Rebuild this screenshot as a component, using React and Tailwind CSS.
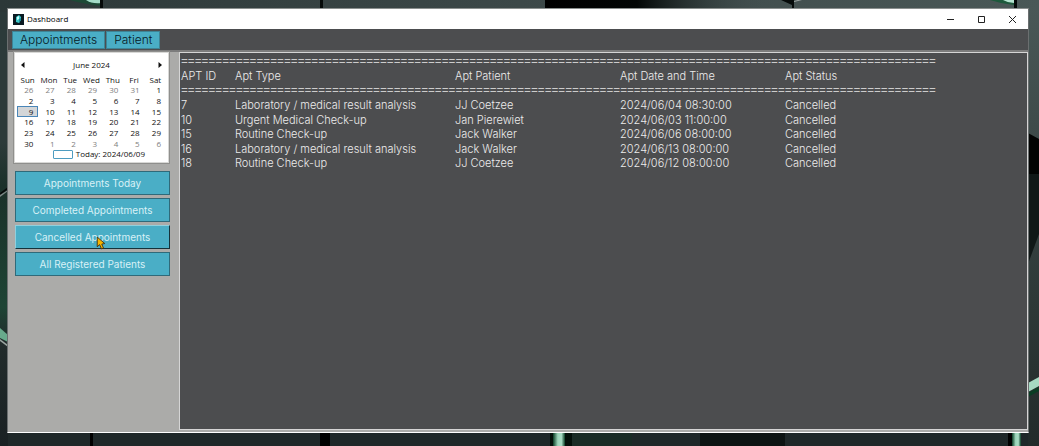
import React from "react";

const WEEKDAYS = ["Sun", "Mon", "Tue", "Wed", "Thu", "Fri", "Sat"];

const WEEKS = [
  [26, 27, 28, 29, 30, 31, 1],
  [2, 3, 4, 5, 6, 7, 8],
  [9, 10, 11, 12, 13, 14, 15],
  [16, 17, 18, 19, 20, 21, 22],
  [23, 24, 25, 26, 27, 28, 29],
  [30, 1, 2, 3, 4, 5, 6],
];

const APPOINTMENTS = [
  ["7", "Laboratory / medical result analysis", "JJ Coetzee", "2024/06/04 08:30:00", "Cancelled"],
  ["10", "Urgent Medical Check-up", "Jan Pierewiet", "2024/06/03 11:00:00", "Cancelled"],
  ["15", "Routine Check-up", "Jack Walker", "2024/06/06 08:00:00", "Cancelled"],
  ["16", "Laboratory / medical result analysis", "Jack Walker", "2024/06/13 08:00:00", "Cancelled"],
  ["18", "Routine Check-up", "JJ Coetzee", "2024/06/12 08:00:00", "Cancelled"],
];

const RULE = "=".repeat(110);

function Wallpaper() {
  return (
    <svg className="absolute inset-0 h-full w-full" viewBox="0 0 1039 446" preserveAspectRatio="none" aria-hidden="true">
      <defs>
        <linearGradient id="top" x1="0" x2="1" y1="0" y2="0">
          <stop offset="0" stopColor="#2c3838" />
          <stop offset="0.5" stopColor="#3c4848" />
          <stop offset="1" stopColor="#4a5857" />
        </linearGradient>
        <linearGradient id="shade" x1="0" x2="1" y1="0" y2="0">
          <stop offset="0" stopColor="#000" />
          <stop offset="0.4" stopColor="#020605" />
          <stop offset="1" stopColor="#46545400" />
        </linearGradient>
        <linearGradient id="left" x1="0" x2="0" y1="0" y2="1">
          <stop offset="0" stopColor="#2c3a3a" />
          <stop offset="0.3" stopColor="#2c3a3a" />
          <stop offset="0.4" stopColor="#1a3029" />
          <stop offset="0.68" stopColor="#1d4434" />
          <stop offset="0.76" stopColor="#222c2c" />
          <stop offset="1" stopColor="#1a2123" />
        </linearGradient>
        <linearGradient id="right" x1="0" x2="0" y1="0" y2="1">
          <stop offset="0" stopColor="#4a5857" />
          <stop offset="0.5" stopColor="#34403f" />
          <stop offset="1" stopColor="#222b2a" />
        </linearGradient>
        <linearGradient id="glow" x1="0" x2="1" y1="0" y2="0">
          <stop offset="0" stopColor="#0a3d24" />
          <stop offset="0.4" stopColor="#9bd3b8" />
          <stop offset="0.7" stopColor="#a8dcc4" />
          <stop offset="1" stopColor="#0a3d24" />
        </linearGradient>
      </defs>
      <rect width="1039" height="446" fill="#1f2829" />
      <rect width="1039" height="12" fill="url(#top)" />
      <rect x="545" width="230" height="12" fill="url(#shade)" />
      <path d="M70 0h32v6Q84 4 70 0Z" fill="#1d4a36" />
      <path d="M86 0h15v3Q92 4 86 0Z" fill="#a4dcc8" />
      <path d="M100 0h3v12h-3ZM320 0h3v12h-3ZM781 0h13v12h-2V5ZM1014 0h3v12h-3Z" fill="#050a09" />
      <path d="M794 2 802 0h-4l-4 1Z" fill="#a0a8a6" />
      <path d="M990 0h24v5Q1002 4 990 0Z" fill="#1d5a3c" />
      <path d="M1003 0h11v3Q1008 3 1003 0Z" fill="#b4e4d0" />
      <rect y="12" width="8" height="434" fill="url(#left)" />
      <path d="M0 193 8 187v2L0 195Z" fill="#050808" />
      <path d="M0 195 8 190v1L0 197Z" fill="#7d8886" />
      <path d="M0 328 8 335v7L0 338Z" fill="#68aa8c" />
      <path d="M0 339 8 345v2L0 341Z" fill="#9aa5a1" />
      <rect x="1028" y="8" width="11" height="438" fill="url(#right)" />
      <path d="M1028 133 1039 139v35h-11Z" fill="#020403" />
      <path d="M1028 174h11v60l-11 30Z" fill="#101817" />
      <path d="M1028 383 1039 377v9l-11 6Z" fill="#a6d9c2" />
      <path d="M1028 393 1039 387v4l-11 6Z" fill="#0a3d24" />
      <rect x="90" y="432" width="3" height="14" fill="#000" />
      <rect x="320" y="432" width="10" height="14" fill="#000" />
      <rect x="550" y="432" width="22" height="14" fill="#03100a" />
      <rect x="553" y="432" width="12" height="14" fill="url(#glow)" />
      <rect x="572" y="432" width="60" height="14" fill="#1a2c26" />
      <rect x="700" y="432" width="85" height="14" fill="#0d1413" />
      <rect x="1008" y="432" width="4" height="14" fill="#000" />
      <rect x="1012" y="432" width="9" height="14" fill="url(#glow)" />
    </svg>
  );
}

function TitleBar() {
  return (
    <header className="flex h-[20px] shrink-0 items-center bg-white">
      <svg className="ml-[5px] h-[11px] w-[11px]" viewBox="0 0 11 11" aria-hidden="true">
        <rect width="11" height="11" fill="#0a1a22" />
        <path d="M3 3 6 1l2 2v3L6 9 3 8Z" fill="#3cc8c8" />
        <path d="M4 3 6 2v3L4 6Z" fill="#c8fafa" />
        <path d="M6 5 8 4v2L6 9Z" fill="#1a8f9c" />
      </svg>
      <h1 className="ml-[3px] flex-1 font-['Open_Sans',sans-serif] text-[8px] leading-3 text-black">Dashboard</h1>
      <div className="flex h-full">
        <button type="button" aria-label="Minimize" className="flex w-[31px] items-center justify-center">
          <svg className="h-[9px] w-[9px]" viewBox="0 0 9 9"><path d="M1 4.500h7" stroke="#222" /></svg>
        </button>
        <button type="button" aria-label="Maximize" className="flex w-[31px] items-center justify-center">
          <svg className="h-[9px] w-[9px]" viewBox="0 0 9 9"><path d="M1.500 1.500h6v6h-6Z" fill="none" stroke="#222" /></svg>
        </button>
        <button type="button" aria-label="Close" className="flex w-[31px] items-center justify-center">
          <svg className="h-[9px] w-[9px]" viewBox="0 0 9 9"><path d="m1 1 7 7M8 1 1 8" stroke="#222" /></svg>
        </button>
      </div>
    </header>
  );
}

function MenuButton({ children }) {
  return (
    <button type="button" className="h-[18px] border border-[#3d8496] bg-[#4aaec6] px-[7px] text-[12px] font-light leading-4 text-[#06181f]">
      {children}
    </button>
  );
}

function Calendar() {
  return (
    <section aria-label="Calendar" className="mr-[10px] ml-[6px] border border-[#d8d8d6] bg-white px-[2px] pb-[3px] font-['Open_Sans',sans-serif] text-[8px] text-[#111] outline outline-[#8f8f8d]">
      <div className="flex h-[22px] items-center justify-between px-1 pt-[2px]">
        <button type="button" aria-label="Previous month">
          <svg className="h-[6px] w-[4px]" viewBox="0 0 4 6"><path d="M3.500 0v6L0 3Z" fill="#111" /></svg>
        </button>
        <span className="leading-3">June 2024</span>
        <button type="button" aria-label="Next month">
          <svg className="h-[6px] w-[4px]" viewBox="0 0 4 6"><path d="M.5 0v6L4 3Z" fill="#111" /></svg>
        </button>
      </div>
      <table className="h-[74px] w-full table-fixed border-collapse">
        <thead>
          <tr>
            {WEEKDAYS.map((day) => (
              <th key={day} className="p-0 text-center font-normal leading-[10px]">{day}</th>
            ))}
          </tr>
        </thead>
        <tbody>
          {WEEKS.map((week, w) => (
            <tr key={w}>
              {week.map((day, d) => {
                const outside = (w === 0 && day > 7) || (w === 5 && day < 7);
                const today = w === 2 && d === 0;
                return (
                  <td key={d} className={outside ? "p-0 pr-[5px] text-right leading-[10px] text-[#808080]" : today ? "bg-[#d4d6d8] p-0 pr-[5px] text-right leading-[10px] shadow-[inset_0_0_0_1px_#4a86b8]" : "p-0 pr-[5px] text-right leading-[10px]"}>
                    {day}
                  </td>
                );
              })}
            </tr>
          ))}
        </tbody>
      </table>
      <button type="button" className="ml-auto flex h-[10px] items-center gap-[3px] pr-[21px] leading-[10px]">
        <span className="h-[9px] w-[20px] rounded-[1px] border border-[#4d9cc0]" />
        Today: 2024/06/09
      </button>
    </section>
  );
}

function SideButton({ children, focused }) {
  return (
    <button
      type="button"
      className={
        focused
          ? "relative h-6 border border-t-[#8fd0de] border-l-[#8fd0de] border-r-[#16323a] border-b-[#16323a] bg-[#4aaec6] text-[10px] leading-3 text-[#d8f1f6]"
          : "relative h-6 border border-[#2f6a7a] bg-[#4aaec6] text-[10px] leading-3 text-[#d8f1f6]"
      }
    >
      {children}
      {focused && (
        <svg className="absolute left-[80px] top-[10px] h-[14px] w-[10px]" viewBox="0 0 9 13" aria-hidden="true">
          <path d="M1 1v9l2.200-2L5 12l1.800-.8L5.200 7.500 8 7Z" fill="#f5b400" stroke="#3a2a10" strokeWidth="0.8" />
        </svg>
      )}
    </button>
  );
}

function RuleRow() {
  return (
    <tr>
      <td colSpan={5} className="p-0 font-['Open_Sans',sans-serif] text-[12px] font-normal text-[#cccccc]">{RULE}</td>
    </tr>
  );
}

function AppointmentTable() {
  return (
    <table className="w-full table-fixed border-collapse text-left text-[11px] font-light leading-[14px] whitespace-nowrap text-[#ececec]">
      <colgroup>
        <col className="w-[54px]" />
        <col className="w-[220px]" />
        <col className="w-[165px]" />
        <col className="w-[165px]" />
        <col />
      </colgroup>
      <thead>
        <RuleRow />
        <tr>
          {["APT ID", "Apt Type", "Apt Patient", "Apt Date and Time", "Apt Status"].map((name) => (
            <th key={name} className="p-0 pb-[1px] font-light">{name}</th>
          ))}
        </tr>
        <RuleRow />
      </thead>
      <tbody>
        {APPOINTMENTS.map((row) => (
          <tr key={row[0]} className="h-[14px] even:h-[15px]">
            {row.map((cell, i) => (
              <td key={i} className="p-0">{cell}</td>
            ))}
          </tr>
        ))}
      </tbody>
    </table>
  );
}

export default function App() {
  return (
    <div className="relative flex h-screen flex-col overflow-hidden pt-2 pr-[10px] pb-[13px] pl-[7px] font-['Century_Gothic','Inter',sans-serif]">
      <Wallpaper />
      <div className="relative flex min-h-0 flex-1 flex-col border border-t-[#8a8f8e] border-r-[#6b6f70] border-b-white border-l-[#6b6f70] bg-[#4c4d4f]">
        <TitleBar />
        <nav className="flex h-[21px] shrink-0 items-center gap-[1px] px-1">
          <MenuButton>Appointments</MenuButton>
          <MenuButton>Patient</MenuButton>
        </nav>
        <div className="flex min-h-0 flex-1 border-t-2 border-[#7c7c7c] bg-[#ababa9]">
          <aside className="flex w-[171px] shrink-0 flex-col">
            <Calendar />
            <div className="mt-2 flex flex-col gap-[3px] pr-[9px] pl-[7px]">
              <SideButton>Appointments Today</SideButton>
              <SideButton>Completed Appointments</SideButton>
              <SideButton focused>Cancelled Appointments</SideButton>
              <SideButton>All Registered Patients</SideButton>
            </div>
          </aside>
          <main className="mb-[2px] min-w-0 flex-1 border border-[#d5d5d5] bg-[#4c4d4f] pt-[2px] pl-[1px]">
            <AppointmentTable />
          </main>
        </div>
      </div>
    </div>
  );
}
